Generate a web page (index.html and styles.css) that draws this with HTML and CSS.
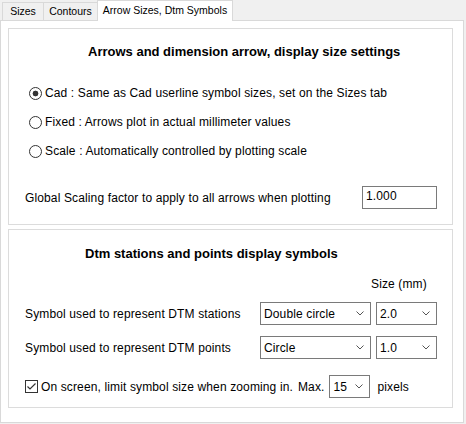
FILE: index.html
```html
<!DOCTYPE html>
<html>
<head>
<meta charset="utf-8">
<link rel="stylesheet" href="styles.css">
</head>
<body>
<div class="tabs">
  <div class="tab tab-sizes">Sizes</div>
  <div class="tab tab-contours">Contours</div>
  <div class="tab tab-active">Arrow Sizes, Dtm Symbols</div>
</div>
<div class="panel">
  <section class="group group-arrows">
    <h2 class="heading heading-arrows">Arrows and dimension arrow, display size settings</h2>
    <div class="radios">
      <div class="radio-row"><span class="radio radio-on"></span><span>Cad : Same as Cad userline symbol sizes, set on the Sizes tab</span></div>
      <div class="radio-row"><span class="radio"></span><span>Fixed : Arrows plot in actual millimeter values</span></div>
      <div class="radio-row"><span class="radio"></span><span>Scale : Automatically controlled by plotting scale</span></div>
    </div>
    <div class="scale-row">
      <span>Global Scaling factor to apply to all arrows when plotting</span>
      <span class="textbox">1.000</span>
    </div>
  </section>
  <section class="group group-dtm">
    <h2 class="heading heading-dtm">Dtm stations and points display symbols</h2>
    <div class="size-head">Size (mm)</div>
    <div class="sym-row">
      <span class="sym-label">Symbol used to represent DTM stations</span>
      <span class="combo combo-wide">Double circle<svg class="chev" width="8" height="5" viewBox="0 0 8 5"><polyline points="0.5,0.5 4,4 7.5,0.5" fill="none" stroke="#555" stroke-width="1"/></svg></span>
      <span class="combo combo-size">2.0<svg class="chev" width="8" height="5" viewBox="0 0 8 5"><polyline points="0.5,0.5 4,4 7.5,0.5" fill="none" stroke="#555" stroke-width="1"/></svg></span>
    </div>
    <div class="sym-row sym-row-2">
      <span class="sym-label">Symbol used to represent DTM points</span>
      <span class="combo combo-wide">Circle<svg class="chev" width="8" height="5" viewBox="0 0 8 5"><polyline points="0.5,0.5 4,4 7.5,0.5" fill="none" stroke="#555" stroke-width="1"/></svg></span>
      <span class="combo combo-size">1.0<svg class="chev" width="8" height="5" viewBox="0 0 8 5"><polyline points="0.5,0.5 4,4 7.5,0.5" fill="none" stroke="#555" stroke-width="1"/></svg></span>
    </div>
    <div class="check-row">
      <span class="check"><svg width="11" height="11" viewBox="0 0 11 11"><polyline points="1.5,5.5 4,8 9.5,2.5" fill="none" stroke="#333" stroke-width="1.2"/></svg></span>
      <span class="check-text">On screen, limit symbol size when zooming in.</span>
      <span class="max-text">Max.</span>
      <span class="combo combo-max">15<svg class="chev" width="8" height="5" viewBox="0 0 8 5"><polyline points="0.5,0.5 4,4 7.5,0.5" fill="none" stroke="#555" stroke-width="1"/></svg></span>
      <span class="pixels">pixels</span>
    </div>
  </section>
</div>
</body>
</html>
```

FILE: styles.css
```css
html, body {
  margin: 0;
  padding: 0;
}
body {
  width: 466px;
  height: 424px;
  background: #f0f0f0;
  font-family: "Liberation Sans", Arial, sans-serif;
  font-size: 12px;
  letter-spacing: 0.13px;
  color: #000;
  overflow: hidden;
}
.tabs {
  display: flex;
  align-items: flex-end;
  height: 20px;
  padding-left: 2px;
  letter-spacing: 0;
}
.tab {
  box-sizing: border-box;
  height: 18px;
  border-top: 1px solid #d9d9d9;
  border-left: 1px solid #d9d9d9;
  font-size: 10.5px;
  line-height: 17px;
  text-align: center;
  color: #000;
}
.tab-sizes { width: 41px; }
.tab-contours { width: 54px; }
.tab-active {
  width: 136px;
  height: 21px;
  margin-bottom: -1px;
  border-right: 1px solid #d9d9d9;
  background: #fff;
  line-height: 19px;
  position: relative;
  z-index: 1;
}
.panel {
  box-sizing: border-box;
  width: 464px;
  height: 403px;
  border: 1px solid #d9d9d9;
  background: #fff;
  padding: 7px 0 0 7px;
}
.group {
  box-sizing: border-box;
  width: 445px;
  border: 1px solid #dcdcdc;
}
.group-arrows {
  height: 197px;
  padding-top: 15px;
}
.group-dtm {
  height: 179px;
  margin-top: 4px;
  padding-top: 16px;
}
.heading {
  margin: 0;
  font-size: 13px;
  font-weight: bold;
  line-height: 16px;
  letter-spacing: 0;
}
.heading-arrows { padding-left: 79px; }
.heading-dtm { padding-left: 76px; }
.radios {
  display: flex;
  flex-direction: column;
  gap: 9px;
  margin-top: 23px;
}
.radio-row {
  display: flex;
  align-items: center;
  height: 20px;
  padding-left: 20px;
}
.radio {
  box-sizing: border-box;
  width: 13px;
  height: 13px;
  border: 1px solid #333;
  border-radius: 50%;
  margin-right: 3px;
  background: #fff;
}
.radio-on {
  background: radial-gradient(circle, #333 0, #333 2.6px, #fff 3.2px);
}
.scale-row {
  display: flex;
  align-items: center;
  justify-content: space-between;
  height: 23px;
  margin-top: 25px;
  padding: 0 15px 0 16px;
}
.textbox {
  box-sizing: border-box;
  width: 75px;
  height: 23px;
  border: 1px solid #7a7a7a;
  padding-left: 3px;
  line-height: 19px;
}
.size-head {
  margin-top: 14px;
  line-height: 16px;
  padding-left: 362px;
}
.sym-row {
  display: flex;
  align-items: center;
  height: 23px;
  margin-top: 10px;
  padding: 0 15px 0 16px;
}
.sym-row-2 { margin-top: 11px; }
.sym-label { flex: 1; }
.combo {
  box-sizing: border-box;
  display: flex;
  align-items: center;
  justify-content: space-between;
  height: 23px;
  border: 1px solid #7a7a7a;
  padding: 0 6px 0 3px;
  background: #fff;
}
.combo-wide { width: 111px; }
.combo-size { width: 61px; margin-left: 5px; }
.combo-max { width: 41px; margin-left: 5px; }
.chev { display: block; }
.check-row {
  display: flex;
  align-items: center;
  height: 23px;
  margin-top: 16px;
  padding-left: 16px;
}
.check {
  box-sizing: border-box;
  display: flex;
  align-items: center;
  justify-content: center;
  width: 13px;
  height: 13px;
  border: 1px solid #333;
  margin-right: 3px;
}
.check svg { display: block; }
.max-text { margin-left: 5px; }
.pixels { margin-left: 7px; }
```
